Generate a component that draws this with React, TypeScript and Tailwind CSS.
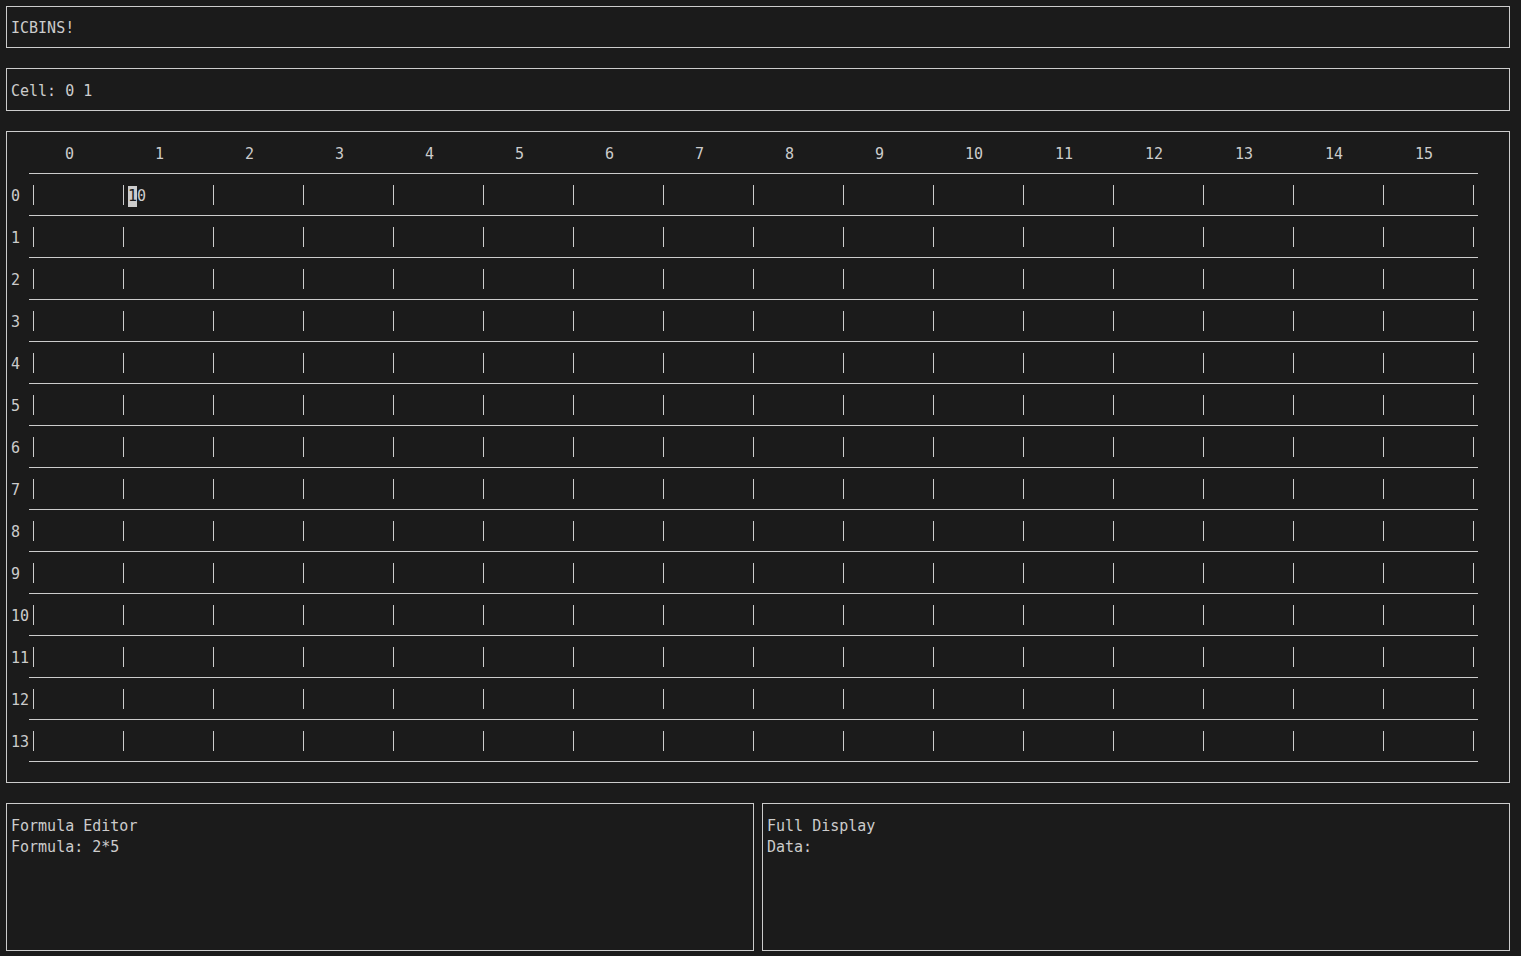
import React from 'react';

const COLS = Array.from({ length: 16 }, (_, i) => i);
const ROWS = Array.from({ length: 14 }, (_, i) => i);

const Box = ({ className, children }: { className: string; children?: React.ReactNode }) => (
  <div className={`border border-[#cccccc] pl-[4px] ${className}`}>{children}</div>
);

const Bar = () => (
  <div className="flex w-[9px] justify-center">
    <div className="h-[20px] w-px bg-[#cccccc]" />
  </div>
);

const Cell = ({ row, col }: { row: number; col: number }) => {
  const selected = row === 0 && col === 1;
  return (
    <div className="flex h-full w-[90px] items-center">
      <Bar />
      {selected && (
        <span className="flex translate-y-[2px]">
          <span className="bg-[#cccccc] text-[#1b1b1b]">1</span>
          <span>0</span>
        </span>
      )}
    </div>
  );
};

export default function App() {
  return (
    <div
      className="flex h-[956px] w-[1521px] flex-col bg-[#1b1b1b] pl-[6px] pt-[6px] text-[15px] leading-[21px] text-[#cccccc]"
      style={{ fontFamily: '"DejaVu Sans Mono", "Liberation Mono", monospace' }}
    >
      <Box className="h-[42px] w-[1504px] pt-[11px]">ICBINS!</Box>
      <Box className="mt-[20px] h-[43px] w-[1504px] pt-[12px]">Cell: 0 1</Box>

      {/* Grid */}
      <Box className="mt-[20px] h-[652px] w-[1504px]">
        <div className="flex h-[42px]">
          <div className="w-[18px]" />
          <div className="flex w-[1449px] items-center border-b border-[#cccccc] pt-[4px]">
            {COLS.map((c) => (
              <div key={c} className="w-[90px] pl-[36px]">
                {c}
              </div>
            ))}
          </div>
        </div>
        {ROWS.map((r) => (
          <div key={r} className="flex h-[42px]">
            <div className="flex w-[18px] items-center pt-[3px]">{r}</div>
            <div className="flex w-[1449px] items-center border-b border-[#cccccc]">
              {COLS.map((c) => (
                <Cell key={c} row={r} col={c} />
              ))}
              <Bar />
            </div>
          </div>
        ))}
      </Box>

      <div className="mt-[20px] flex gap-[8px]">
        <Box className="h-[148px] w-[748px] pt-[12px]">
          <div>Formula Editor</div>
          <div>Formula: 2*5</div>
        </Box>
        <Box className="h-[148px] w-[748px] pt-[12px]">
          <div>Full Display</div>
          <div>Data:</div>
        </Box>
      </div>
    </div>
  );
}
